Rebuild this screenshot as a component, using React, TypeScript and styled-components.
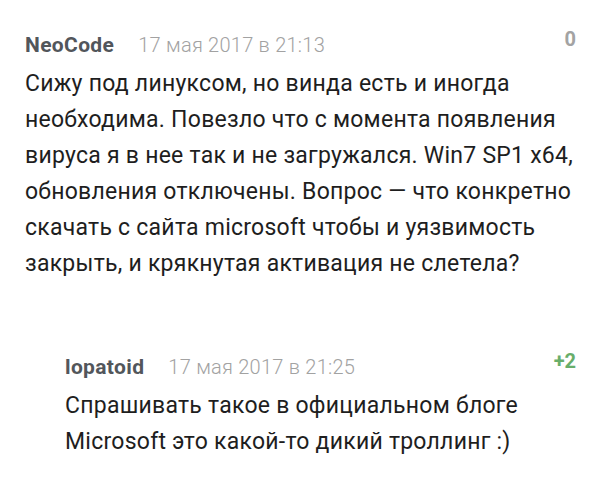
import React from "react";
import styled, { createGlobalStyle } from "styled-components";

const Global = createGlobalStyle`
  html, body { margin: 0; padding: 0; background: #ffffff; }
  body { font-family: Roboto, "Noto Sans", sans-serif; -webkit-font-smoothing: antialiased; }
`;

const Page = styled.div`
  width: 600px;
  height: 477px;
  background: #fff;
  padding: 33px 24px 0 25px;
  box-sizing: border-box;
  overflow: hidden;
`;

const Comment = styled.div<{ $indent?: number; $gap?: number }>`
  display: flex;
  flex-direction: column;
  margin-left: ${(p) => p.$indent ?? 0}px;
  margin-top: ${(p) => p.$gap ?? 0}px;
`;

const Header = styled.div`
  display: flex;
  align-items: baseline;
  height: 24px;
  line-height: 24px;
`;

const Author = styled.span`
  font-size: 21px;
  font-weight: 700;
  color: #52565b;
  letter-spacing: 0.35px;
`;

const DateText = styled.span`
  font-size: 20px;
  font-weight: 300;
  color: #a2a2a2;
  margin-left: 24px;
  letter-spacing: 0.25px;
`;

const Score = styled.span<{ $positive?: boolean }>`
  margin-left: auto;
  align-self: flex-start;
  font-size: 20px;
  line-height: 12px;
  font-weight: 700;
  color: ${(p) => (p.$positive ? "#68ae6a" : "#a3a3a3")};
`;

const Body = styled.p`
  margin: 9px 0 0;
  font-size: 23px;
  line-height: 36px;
  color: #1e1e1e;
  letter-spacing: 0.25px;
  white-space: nowrap;
`;

export default function App() {
  return (
    <>
      <Global />
      <Page>
        <Comment>
          <Header>
            <Author>NeoCode</Author>
            <DateText>17 мая 2017 в 21:13</DateText>
            <Score>0</Score>
          </Header>
          <Body>
            Сижу под линуксом, но винда есть и иногда
            <br />
            необходима. Повезло что с момента появления
            <br />
            вируса я в нее так и не загружался. Win7 SP1 x64,
            <br />
            обновления отключены. Вопрос — что конкретно
            <br />
            скачать с сайта microsoft чтобы и уязвимость
            <br />
            закрыть, и крякнутая активация не слетела?
          </Body>
        </Comment>
        <Comment $indent={40} $gap={73}>
          <Header>
            <Author>lopatoid</Author>
            <DateText>17 мая 2017 в 21:25</DateText>
            <Score $positive>+2</Score>
          </Header>
          <Body>
            Спрашивать такое в официальном блоге
            <br />
            Microsoft это какой-то дикий троллинг :)
          </Body>
        </Comment>
      </Page>
    </>
  );
}
